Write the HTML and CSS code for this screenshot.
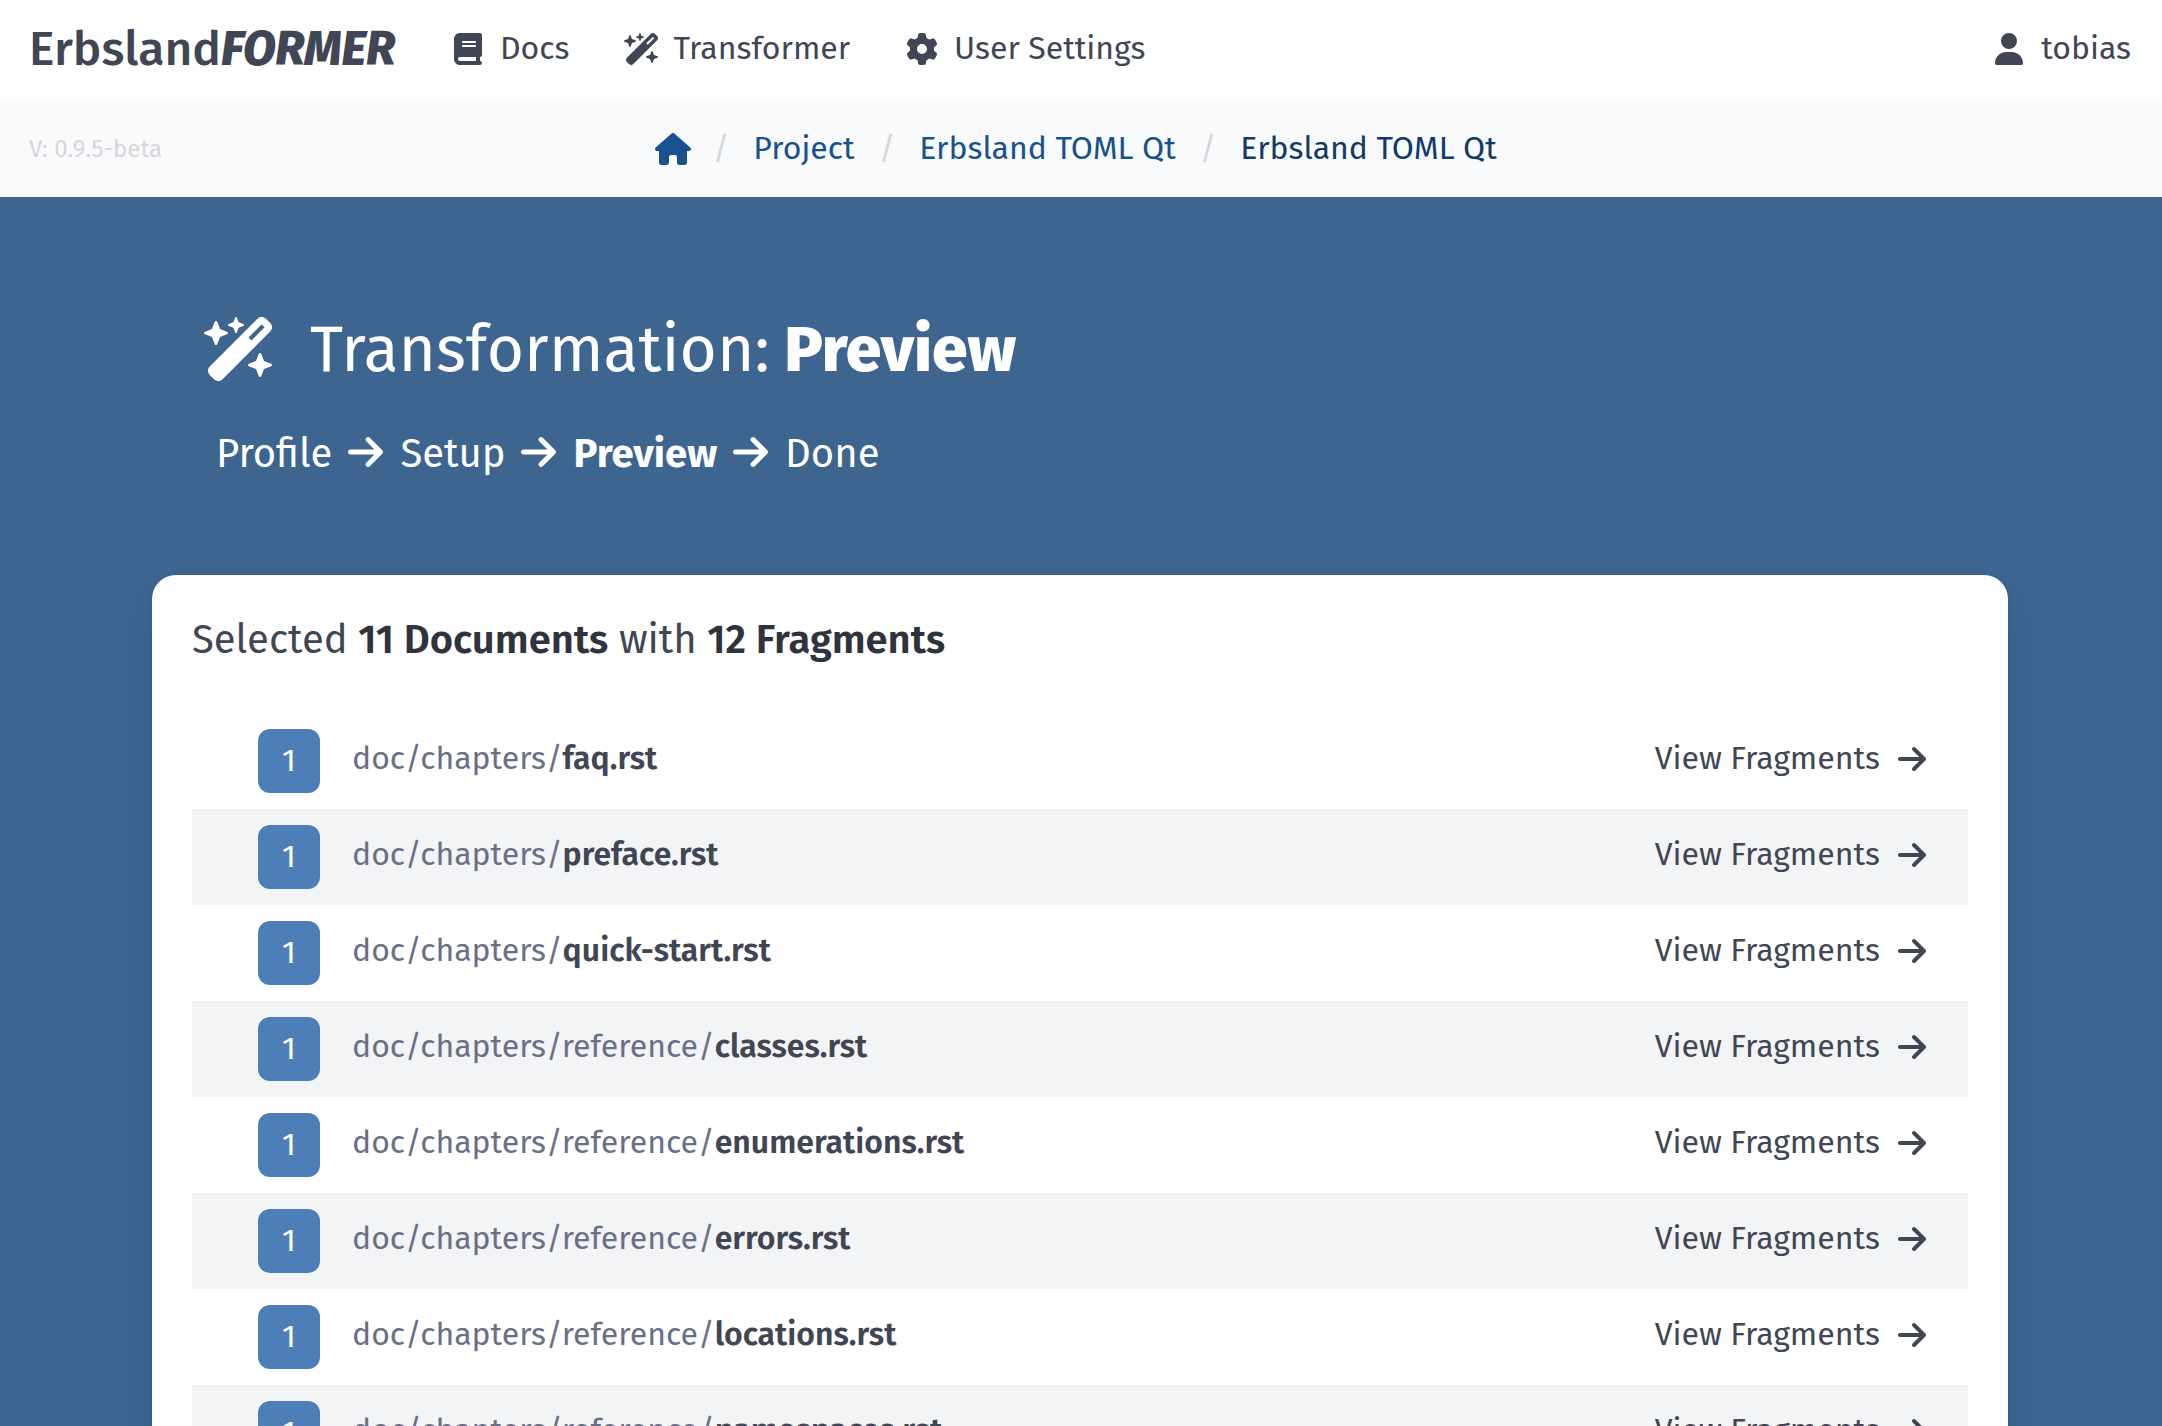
FILE: index.html
```html
<!DOCTYPE html>
<html lang="en">
<head>
<meta charset="utf-8">
<title>Transformation: Preview</title>
<link rel="stylesheet" href="styles.css">
</head>
<body>
<svg class="sprite" aria-hidden="true">
  <symbol id="i-book" viewBox="0 0 448 512"><path d="M96 0C43 0 0 43 0 96V416c0 53 43 96 96 96H384h32c17.7 0 32-14.3 32-32s-14.3-32-32-32V384c17.7 0 32-14.3 32-32V32c0-17.7-14.3-32-32-32H384 96zm0 384H352v64H96c-17.7 0-32-14.3-32-32s14.3-32 32-32zm32-240c0-8.8 7.2-16 16-16H336c8.8 0 16 7.2 16 16s-7.2 16-16 16H144c-8.8 0-16-7.2-16-16zm16 48H336c8.8 0 16 7.2 16 16s-7.2 16-16 16H144c-8.8 0-16-7.2-16-16s7.2-16 16-16z"/></symbol>
  <symbol id="i-wand" viewBox="0 0 576 512"><path d="M234.7 42.7L197 56.8c-3 1.1-5 4-5 7.2s2 6.1 5 7.2l37.7 14.1L248.8 123c1.1 3 4 5 7.2 5s6.1-2 7.2-5l14.1-37.7L315 71.2c3-1.1 5-4 5-7.2s-2-6.1-5-7.2L277.3 42.7 263.2 5c-1.1-3-4-5-7.2-5s-6.1 2-7.2 5L234.7 42.7zM46.1 395.4c-18.7 18.7-18.7 49.1 0 67.9l34.6 34.6c18.7 18.7 49.1 18.7 67.9 0L529.9 116.5c18.7-18.7 18.7-49.1 0-67.9L495.3 14.1c-18.7-18.7-49.1-18.7-67.9 0L46.1 395.4zM484.6 82.6l-105 105-23.3-23.3 105-105 23.3 23.3zM7.5 117.2C3 118.9 0 123.2 0 128s3 9.1 7.5 10.8L64 160l21.2 56.5c1.7 4.5 6 7.5 10.8 7.5s9.1-3 10.8-7.5L128 160l56.5-21.2c4.5-1.7 7.5-6 7.5-10.8s-3-9.1-7.5-10.8L128 96 106.8 39.5C105.1 35 100.8 32 96 32s-9.1 3-10.8 7.5L64 96 7.5 117.2zm352 256c-4.5 1.7-7.5 6-7.5 10.8s3 9.1 7.5 10.8L416 416l21.2 56.5c1.7 4.5 6 7.5 10.8 7.5s9.1-3 10.8-7.5L480 416l56.5-21.2c4.5-1.7 7.5-6 7.5-10.8s-3-9.1-7.5-10.8L480 352l-21.2-56.5c-1.7-4.5-6-7.5-10.8-7.5s-9.1 3-10.8 7.5L416 352l-56.5 21.2z"/></symbol>
  <symbol id="i-gear" viewBox="0 0 512 512"><path d="M495.9 166.6c3.2 8.7 .5 18.4-6.4 24.6l-43.3 39.4c1.1 8.3 1.7 16.8 1.7 25.4s-.6 17.1-1.7 25.4l43.3 39.4c6.9 6.2 9.6 15.9 6.4 24.6c-4.4 11.9-9.7 23.3-15.8 34.3l-4.7 8.1c-6.6 11-14 21.4-22.1 31.2c-5.9 7.2-15.7 9.6-24.5 6.8l-55.7-17.7c-13.4 10.3-28.2 18.9-44 25.4l-12.5 57.1c-2 9.1-9 16.3-18.2 17.8c-13.8 2.3-28 3.5-42.5 3.5s-28.7-1.2-42.5-3.5c-9.2-1.5-16.2-8.7-18.2-17.8l-12.5-57.1c-15.8-6.5-30.6-15.1-44-25.4L83.1 425.9c-8.8 2.8-18.6 .3-24.5-6.8c-8.1-9.8-15.5-20.2-22.1-31.2l-4.7-8.1c-6.1-11-11.4-22.4-15.8-34.3c-3.2-8.7-.5-18.4 6.4-24.6l43.3-39.4C64.6 273.1 64 264.6 64 256s.6-17.1 1.7-25.4L22.4 191.2c-6.9-6.2-9.6-15.9-6.4-24.6c4.4-11.9 9.7-23.3 15.8-34.3l4.7-8.1c6.6-11 14-21.4 22.1-31.2c5.9-7.2 15.7-9.6 24.5-6.8l55.7 17.7c13.4-10.3 28.2-18.9 44-25.4l12.5-57.1c2-9.1 9-16.3 18.2-17.8C227.3 1.2 241.5 0 256 0s28.7 1.2 42.5 3.5c9.2 1.5 16.2 8.7 18.2 17.8l12.5 57.1c15.8 6.5 30.6 15.1 44 25.4l55.7-17.7c8.8-2.8 18.6-.3 24.5 6.8c8.1 9.8 15.5 20.2 22.1 31.2l4.7 8.1c6.1 11 11.4 22.4 15.8 34.3zM256 336a80 80 0 1 0 0-160 80 80 0 1 0 0 160z"/></symbol>
  <symbol id="i-user" viewBox="0 0 448 512"><path d="M224 256A128 128 0 1 0 224 0a128 128 0 1 0 0 256zm-45.7 48C79.8 304 0 383.8 0 482.3C0 498.7 13.3 512 29.7 512H418.3c16.4 0 29.7-13.3 29.7-29.7C448 383.8 368.2 304 269.7 304H178.3z"/></symbol>
  <symbol id="i-home" viewBox="0 0 576 512"><path d="M575.8 255.5c0 18-15 32.1-32 32.1h-32l.7 160.2c0 2.7-.2 5.4-.5 8.1V472c0 22.1-17.9 40-40 40H456c-1.1 0-2.2 0-3.3-.1c-1.4 .1-2.8 .1-4.2 .1H416 392c-22.1 0-40-17.9-40-40V448 384c0-17.7-14.3-32-32-32H256c-17.7 0-32 14.3-32 32v64 24c0 22.1-17.9 40-40 40H160 128.1c-1.5 0-3-.1-4.5-.2c-1.2 .1-2.4 .2-3.6 .2H104c-22.1 0-40-17.9-40-40V360c0-.9 0-1.9 .1-2.8V287.6H32c-18 0-32-14-32-32.1c0-9 3-17 10-24L266.4 8c7-7 15-8 22-8s15 2 21 7L564.8 231.5c8 7 12 15 11 24z"/></symbol>
  <symbol id="i-arrow" viewBox="0 0 448 512"><path d="M438.6 278.6c12.5-12.5 12.5-32.8 0-45.3l-160-160c-12.5-12.5-32.8-12.5-45.3 0s-12.5 32.8 0 45.3L338.8 224 32 224c-17.7 0-32 14.3-32 32s14.3 32 32 32l306.7 0L233.4 393.4c-12.5 12.5-12.5 32.8 0 45.3s32.8 12.5 45.3 0l160-160z"/></symbol>
</svg>

<header class="navbar">
  <a class="brand"><span class="brand-a">Erbsland</span><em class="brand-b">FORMER</em></a>
  <nav class="menu">
    <a class="menu-item"><svg class="icon w-48"><use href="#i-book"/></svg><span class="label">Docs</span></a>
    <a class="menu-item"><svg class="icon w-48"><use href="#i-wand"/></svg><span class="label">Transformer</span></a>
    <a class="menu-item"><svg class="icon w-48"><use href="#i-gear"/></svg><span class="label">User Settings</span></a>
  </nav>
  <a class="menu-item user"><svg class="icon w-48"><use href="#i-user"/></svg><span class="label">tobias</span></a>
</header>

<div class="subbar">
  <span class="version">V: 0.9.5-beta</span>
  <nav class="crumbs">
    <a class="home"><svg class="icon w-36"><use href="#i-home"/></svg></a>
    <span class="sep">/</span>
    <a class="crumb">Project</a>
    <span class="sep">/</span>
    <a class="crumb">Erbsland TOML Qt</a>
    <span class="sep">/</span>
    <a class="crumb active">Erbsland TOML Qt</a>
  </nav>
</div>

<section class="hero">
  <h1 class="title"><svg class="title-icon"><use href="#i-wand"/></svg><span class="title-text">Transformation: <strong>Preview</strong></span></h1>
  <div class="steps">
    <span>Profile</span>
    <svg class="step-arrow"><use href="#i-arrow"/></svg>
    <span>Setup</span>
    <svg class="step-arrow"><use href="#i-arrow"/></svg>
    <strong>Preview</strong>
    <svg class="step-arrow"><use href="#i-arrow"/></svg>
    <span>Done</span>
  </div>
</section>

<main class="card">
  <h2 class="summary">Selected <strong>11 Documents</strong> with <strong>12 Fragments</strong></h2>
  <ul class="files">
    <li class="file"><span class="count">1</span><span class="path">doc/chapters/<strong>faq.rst</strong></span><a class="view"><span class="label">View Fragments</span><svg class="icon w-28"><use href="#i-arrow"/></svg></a></li>
    <li class="file"><span class="count">1</span><span class="path">doc/chapters/<strong>preface.rst</strong></span><a class="view"><span class="label">View Fragments</span><svg class="icon w-28"><use href="#i-arrow"/></svg></a></li>
    <li class="file"><span class="count">1</span><span class="path">doc/chapters/<strong>quick-start.rst</strong></span><a class="view"><span class="label">View Fragments</span><svg class="icon w-28"><use href="#i-arrow"/></svg></a></li>
    <li class="file"><span class="count">1</span><span class="path">doc/chapters/reference/<strong>classes.rst</strong></span><a class="view"><span class="label">View Fragments</span><svg class="icon w-28"><use href="#i-arrow"/></svg></a></li>
    <li class="file"><span class="count">1</span><span class="path">doc/chapters/reference/<strong>enumerations.rst</strong></span><a class="view"><span class="label">View Fragments</span><svg class="icon w-28"><use href="#i-arrow"/></svg></a></li>
    <li class="file"><span class="count">1</span><span class="path">doc/chapters/reference/<strong>errors.rst</strong></span><a class="view"><span class="label">View Fragments</span><svg class="icon w-28"><use href="#i-arrow"/></svg></a></li>
    <li class="file"><span class="count">1</span><span class="path">doc/chapters/reference/<strong>locations.rst</strong></span><a class="view"><span class="label">View Fragments</span><svg class="icon w-28"><use href="#i-arrow"/></svg></a></li>
    <li class="file"><span class="count">1</span><span class="path">doc/chapters/reference/<strong>namespaces.rst</strong></span><a class="view"><span class="label">View Fragments</span><svg class="icon w-28"><use href="#i-arrow"/></svg></a></li>
  </ul>
</main>
</body>
</html>
```
FILE: styles.css
```css
* { box-sizing: border-box; }

html, body { height: 100%; }

body {
  margin: 0;
  overflow: hidden;
  background: #3e658f;
  color: #404654;
  font: 400 32px/48px "Fira Sans", "Noto Sans", sans-serif;
  -webkit-font-smoothing: antialiased;
}

.sprite { display: none; }
.icon { display: block; height: 32px; fill: currentColor; }
.w-28 { width: 28px; }
.w-36 { width: 36px; }
.w-48 { width: 48px; }
.label { margin-top: -2px; }

.navbar {
  display: flex;
  align-items: center;
  height: 100px;
  padding: 0 31px 2px 29px;
  background: #fff;
}
.brand { font-size: 48px; font-weight: 500; white-space: nowrap; }
.brand-b { font-weight: 800; letter-spacing: -.2px; }
.menu { display: flex; gap: 48px; margin-left: 49px; }
.menu-item { display: flex; align-items: center; gap: 8px; }
.user { margin-left: auto; }

.subbar {
  display: grid;
  grid-template-columns: 1fr auto 1fr;
  align-items: center;
  height: 97px;
  padding: 0 39px 0 29px;
  background: #f9fafc;
}
.version { font-size: 24px; color: #d5d7da; }
.crumbs { display: flex; align-items: center; color: #17528f; }
.crumb, .sep { margin-top: -2px; }
.crumb.active { color: #123a68; }
.home { margin-right: -2.5px; }
.sep { padding: 0 24px; color: #d5d7da; }

.hero { height: 378px; padding: 111px 204px 0; color: #fff; }
.title {
  display: flex;
  align-items: center;
  gap: 34px;
  margin: 0;
  font-size: 64px;
  line-height: 80px;
  font-weight: 400;
}
.title-icon { width: 72px; height: 64px; fill: #fff; }
.title-text { padding-top: 2px; margin-bottom: -1px; }
.title strong { font-weight: 800; margin-left: -2.5px; }
.steps {
  display: flex;
  align-items: center;
  gap: 16px;
  margin: 35px 0 0 12px;
  font-size: 40px;
  line-height: 60px;
}
.steps strong { font-weight: 700; }
.step-arrow { width: 35px; height: 40px; fill: #fff; margin: -4px 1px 0 0; }

.card {
  width: 1856px;
  margin-left: 152px;
  padding: 40px;
  border-radius: 24px;
  background: #fff;
  box-shadow: 0 16px 32px -4px rgba(10, 10, 10, .1), 0 0 0 2px rgba(10, 10, 10, .02);
}
.summary { margin: 0; font-size: 40px; line-height: 50px; font-weight: 400; }
.summary strong { font-weight: 600; color: #2e333d; }
.files { list-style: none; margin: 48px 0 0; padding: 0; }
.file {
  display: flex;
  align-items: center;
  height: 96px;
  padding: 0 42px 0 66px;
}
.file:nth-child(even) { background: #f3f4f6; }
.count {
  width: 62px;
  height: 64px;
  border-radius: 12px;
  background: #4d7eb5;
  color: #fff;
  text-align: center;
  line-height: 62px;
}
.path { margin: -6px 0 0 32px; color: #6a7088; }
.path strong { font-weight: 600; color: #404654; }
.view { display: flex; align-items: center; gap: 18px; margin: -4px 0 0 auto; }
```
